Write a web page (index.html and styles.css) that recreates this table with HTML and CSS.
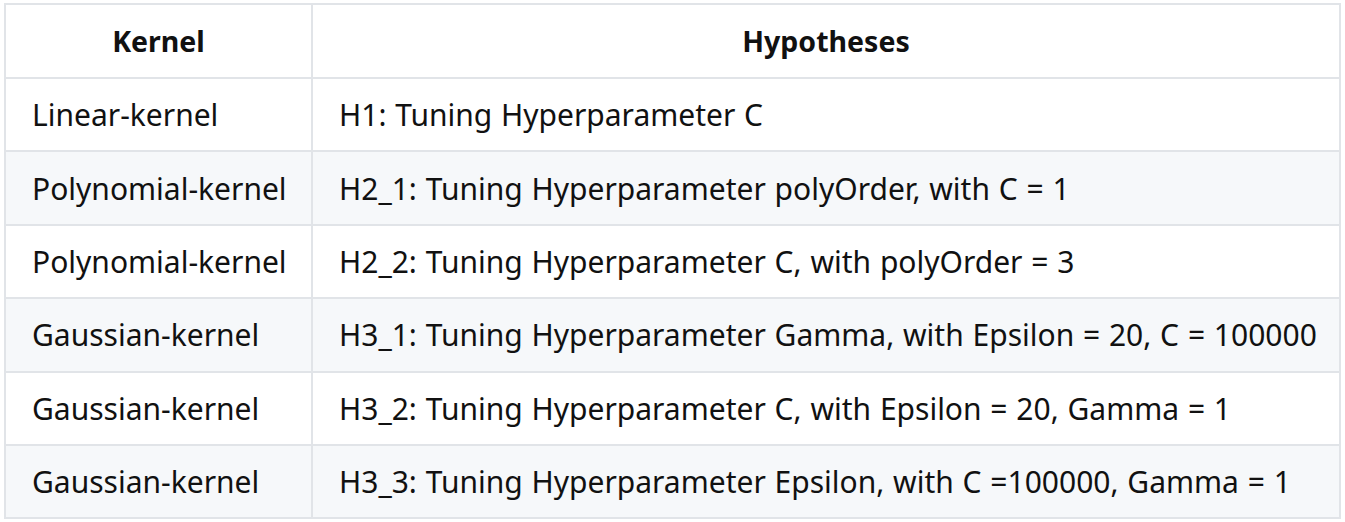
FILE: index.html
```html
<!DOCTYPE html>
<html>
<head>
<meta charset="utf-8">
<link rel="stylesheet" href="styles.css">
</head>
<body>
<div class="wrap">
<table class="grid">
  <colgroup><col class="c1"><col class="c2"></colgroup>
  <thead>
    <tr><th>Kernel</th><th>Hypotheses</th></tr>
  </thead>
  <tbody>
    <tr><td>Linear-kernel</td><td>H1: Tuning Hyperparameter C</td></tr>
    <tr><td>Polynomial-kernel</td><td>H2_1: Tuning Hyperparameter polyOrder, with C = 1</td></tr>
    <tr><td>Polynomial-kernel</td><td>H2_2: Tuning Hyperparameter C, with polyOrder = 3</td></tr>
    <tr><td>Gaussian-kernel</td><td>H3_1: Tuning Hyperparameter Gamma, with Epsilon = 20, C = 100000</td></tr>
    <tr><td>Gaussian-kernel</td><td>H3_2: Tuning Hyperparameter C, with Epsilon = 20, Gamma = 1</td></tr>
    <tr><td>Gaussian-kernel</td><td>H3_3: Tuning Hyperparameter Epsilon, with C =100000, Gamma = 1</td></tr>
  </tbody>
</table>
</div>
</body>
</html>
```

FILE: styles.css
```css
html, body {
  margin: 0;
  padding: 0;
  background: #ffffff;
}
.wrap {
  padding: 3px 4px 0 4px;
}
.grid {
  width: 1337px;
  border-collapse: collapse;
  font-family: "Noto Sans", "Open Sans", sans-serif;
  font-size: 30px;
  color: #111111;
  table-layout: fixed;
}
.c1 { width: 307px; }
.grid th, .grid td {
  border: 2px solid #e1e4e8;
  height: 73.4px;
  padding: 0 0 0 26px;
  text-align: left;
  white-space: nowrap;
  box-sizing: border-box;
}
.grid td + td {
  word-spacing: 1px;
}
.grid th {
  font-weight: 700;
  font-size: 28.5px;
  text-align: center;
  padding: 0;
  height: 74px;
}
.grid tbody tr:nth-child(even) {
  background: #f6f8fa;
}
```
